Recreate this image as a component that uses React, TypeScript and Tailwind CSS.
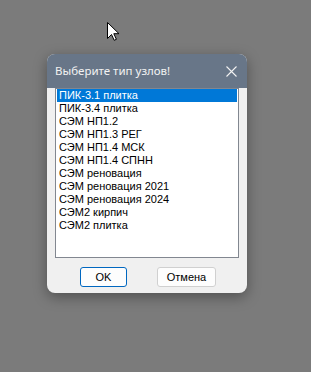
import React from "react";

const ITEMS = [
  "ПИК-3.1 плитка",
  "ПИК-3.4 плитка",
  "СЭМ НП1.2",
  "СЭМ НП1.3 РЕГ",
  "СЭМ НП1.4 МСК",
  "СЭМ НП1.4 СПНН",
  "СЭМ реновация",
  "СЭМ реновация 2021",
  "СЭМ реновация 2024",
  "СЭМ2 кирпич",
  "СЭМ2 плитка",
];

function Cursor() {
  return (
    <svg className="absolute left-[107px] top-[22px]" width="13" height="19" viewBox="0 0 13 19">
      <path
        d="M0.5 0.5 L0.5 16.5 L4.5 12.5 L7.2 18.3 L9.4 17.3 L6.8 11.7 L12 11.7 Z"
        fill="#ffffff"
        stroke="#000000"
        strokeWidth="1"
        strokeLinejoin="miter"
      />
    </svg>
  );
}

export default function App() {
  const selected = 0;

  return (
    <div
      className="relative h-[372px] w-[311px] overflow-hidden bg-[#7b7b7b] pl-[47px] pt-[54px]"
      style={{ fontFamily: '"Liberation Sans", Arial, sans-serif' }}
    >
      {/* Dialog */}
      <div className="flex h-[239px] w-[200px] flex-col overflow-hidden rounded-[8px] bg-[#f0f0f0] shadow-[0_4px_14px_rgba(0,0,0,0.35)]">
        {/* Title bar */}
        <div className="flex h-[34px] shrink-0 items-center justify-between bg-[#687688] pl-[8px] pr-[10px]">
          <span className="font-['Noto_Sans',sans-serif] text-[11.5px] leading-none text-[#f2f2f2]">
            Выберите тип узлов!
          </span>
          <svg width="11" height="11" viewBox="0 0 11 11">
            <path d="M0.5 0.5 L10.5 10.5 M10.5 0.5 L0.5 10.5" stroke="#f2f2f2" strokeWidth="1.1" />
          </svg>
        </div>

        {/* List */}
        <div className="mx-[8px] h-[170px] shrink-0 border border-[#828790] bg-white px-px">
          {ITEMS.map((item, i) => (
            <div
              key={item}
              className={`h-[13px] whitespace-nowrap pl-[2px] text-[11px] leading-[13px] ${
                i === selected ? "bg-[#0078d7] text-white" : "text-black"
              }`}
            >
              {item}
            </div>
          ))}
        </div>

        {/* Buttons */}
        <div className="mt-[9px] flex gap-[30px] pl-[33px]">
          <button className="h-[20px] w-[47px] rounded-[3px] border border-[#0067c0] bg-[#fdfdfd] text-[11px] leading-none text-black">
            OK
          </button>
          <button className="h-[20px] w-[59px] rounded-[3px] border border-[#d0d0d0] bg-[#fdfdfd] text-[11px] leading-none text-black">
            Отмена
          </button>
        </div>
      </div>

      <Cursor />
    </div>
  );
}
